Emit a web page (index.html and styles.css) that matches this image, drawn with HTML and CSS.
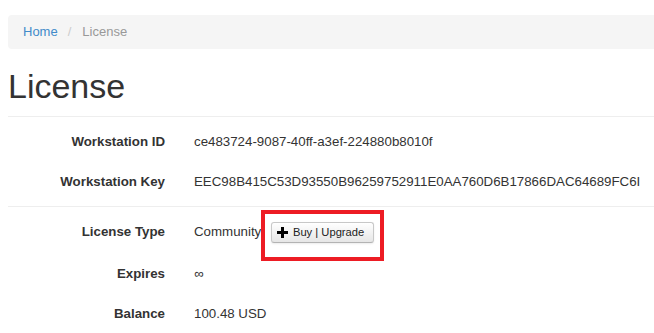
FILE: index.html
```html
<!DOCTYPE html>
<html>
<head>
<meta charset="utf-8">
<title>License</title>
<link rel="stylesheet" href="styles.css">
</head>
<body>
<div class="page">
  <nav class="breadcrumb">
    <a class="crumb-link" href="#">Home</a>
    <span class="crumb-sep">/</span>
    <span class="crumb-active">License</span>
  </nav>
  <h1 class="title">License</h1>
  <section class="group">
    <div class="row"><div class="label">Workstation ID</div><div class="value">ce483724-9087-40ff-a3ef-224880b8010f</div></div>
    <div class="row"><div class="label">Workstation Key</div><div class="value">EEC98B415C53D93550B96259752911E0AA760D6B17866DAC64689FC6I</div></div>
  </section>
  <section class="group">
    <div class="row"><div class="label">License Type</div><div class="value">Community <span class="annot"><button class="btn" type="button"><svg class="btn-icon" width="11" height="11" viewBox="0 0 11 11"><path d="M4 0h3v4h4v3H7v4H4V7H0V4h4z" fill="#000"/></svg>Buy | Upgrade</button></span></div></div>
    <div class="row"><div class="label">Expires</div><div class="value">∞</div></div>
    <div class="row"><div class="label">Balance</div><div class="value">100.48 USD</div></div>
  </section>
</div>
</body>
</html>
```
FILE: styles.css
```css
html, body {
  margin: 0;
  padding: 0;
  background: #fff;
}
body {
  font-family: "Liberation Sans", Arial, sans-serif;
  font-size: 13px;
  line-height: 20px;
  color: #333;
}
.page {
  padding: 15px 0 0 8px;
}
.breadcrumb {
  display: flex;
  align-items: center;
  background: #f5f5f5;
  border-radius: 4px 0 0 4px;
  padding: 8px 15px;
  line-height: 18px;
  height: 18px;
}
.crumb-link {
  color: #428bca;
  text-decoration: none;
}
.crumb-sep {
  color: #ccc;
  padding: 0 11px 0 10px;
}
.crumb-active {
  color: #999;
}
.title {
  margin: 19px 0 11px;
  font-size: 34px;
  line-height: 37px;
  font-weight: 400;
  color: #333;
}
.group {
  border-top: 1px solid #eee;
  padding: 5px 0 4px;
}
.row {
  display: grid;
  grid-template-columns: 157px 1fr;
  column-gap: 29px;
  padding: 10px 0;
  font-size: 13.3px;
}
.label {
  font-weight: 700;
  text-align: right;
}
.value {
  white-space: nowrap;
}
.annot {
  position: relative;
  display: inline-block;
  margin-left: 6px;
  vertical-align: top;
}
.annot::after {
  content: "";
  position: absolute;
  left: -10px;
  right: -10px;
  top: -12px;
  bottom: -17px;
  border: 4px solid #ed1c24;
  pointer-events: none;
}
.btn {
  display: inline-flex;
  align-items: center;
  gap: 5px;
  height: 21px;
  padding: 0 9px 0 5px;
  font-family: "Liberation Sans", Arial, sans-serif;
  font-size: 11.2px;
  line-height: 15px;
  color: #222;
  background: linear-gradient(#ffffff, #e6e6e6);
  border: 1px solid #c8c8c8;
  border-bottom-color: #b3b3b3;
  border-radius: 3px;
  box-shadow: inset 0 1px 0 rgba(255,255,255,.2), 0 1px 2px rgba(0,0,0,.08);
}
.btn-icon {
  display: block;
}
```
